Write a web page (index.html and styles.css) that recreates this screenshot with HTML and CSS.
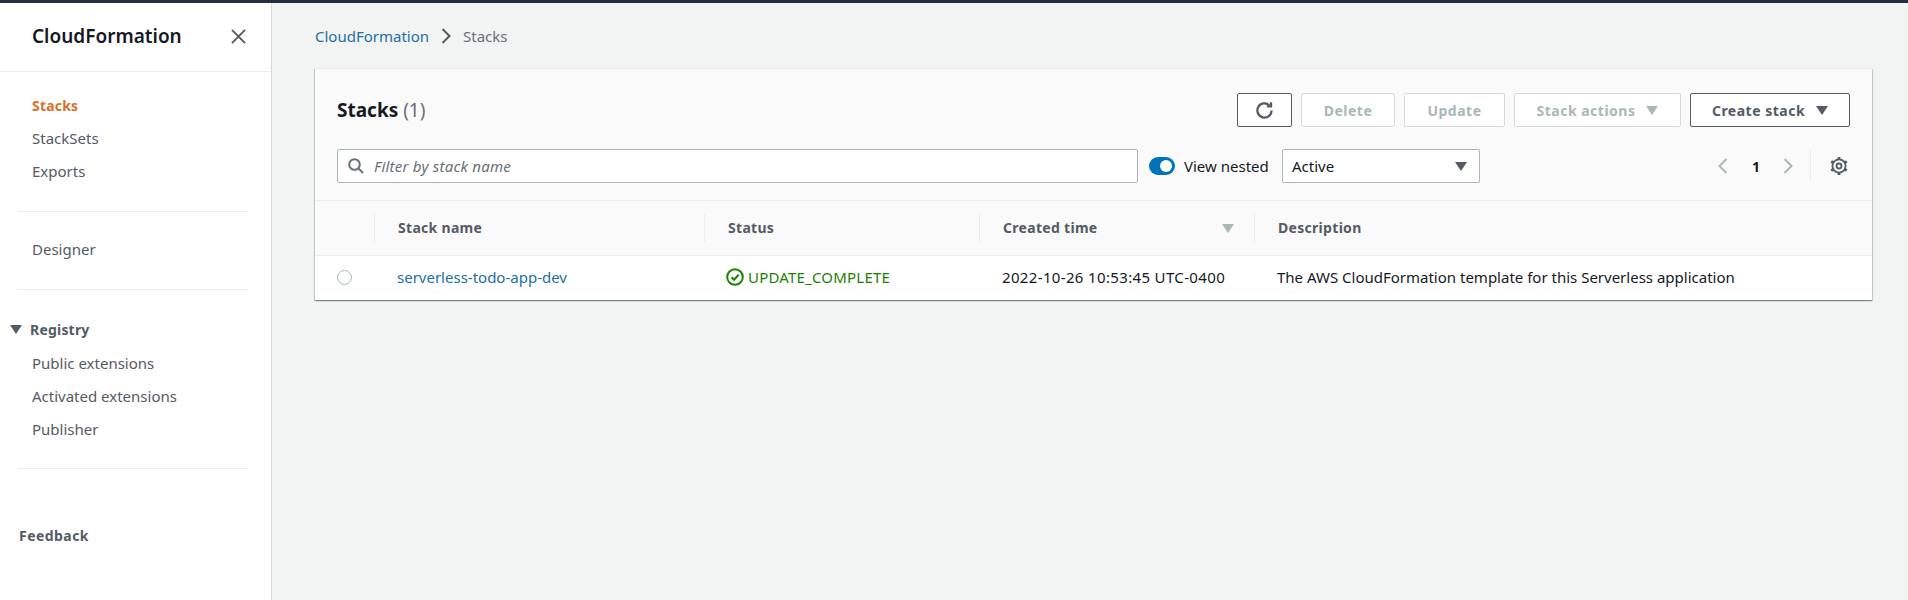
FILE: index.html
```html
<!DOCTYPE html>
<html lang="en">
<head>
<meta charset="utf-8">
<title>CloudFormation Stacks</title>
<link rel="stylesheet" href="styles.css">
</head>
<body>
<div class="app">
  <nav class="side">
    <div class="side-head">
      <span class="side-title">CloudFormation</span>
      <svg class="close" viewBox="0 0 16 16"><path d="M1 1l14 14M15 1L1 15"/></svg>
    </div>
    <div class="side-sec first">
      <a class="nav active">Stacks</a>
      <a class="nav">StackSets</a>
      <a class="nav">Exports</a>
    </div>
    <div class="rule"></div>
    <div class="side-sec">
      <a class="nav">Designer</a>
    </div>
    <div class="rule"></div>
    <div class="side-sec reg">
      <div class="reg-head"><span class="tri side-tri"></span><span>Registry</span></div>
      <a class="nav">Public extensions</a>
      <a class="nav">Activated extensions</a>
      <a class="nav">Publisher</a>
    </div>
    <div class="rule"></div>
    <div class="feedback">Feedback</div>
  </nav>
  <main class="main">
    <div class="crumbs">
      <a class="link">CloudFormation</a>
      <svg class="crumb-sep" viewBox="0 0 10 16"><path d="M1.500 1L8.500 8l-7 7"/></svg>
      <span class="crumb-cur">Stacks</span>
    </div>
    <section class="card">
      <div class="card-head">
        <div class="row-one">
          <h1 class="heading">Stacks <span class="count">(1)</span></h1>
          <div class="actions">
            <button class="btn icon-btn"><svg class="refresh" viewBox="0 0 16 16"><path d="M14 8a6 6 0 1 1-1.900-4.400"/><path d="M13.500 1v3.500H10"/></svg></button>
            <button class="btn off b-delete">Delete</button>
            <button class="btn off b-update">Update</button>
            <button class="btn off b-stack">Stack actions<span class="tri tri-off"></span></button>
            <button class="btn b-create">Create stack<span class="tri"></span></button>
          </div>
        </div>
        <div class="row-two">
          <div class="search">
            <svg class="mag" viewBox="0 0 16 16"><circle cx="6.500" cy="6.500" r="5.300"/><path d="M10.500 10.500L15 15"/></svg>
            <span class="placeholder">Filter by stack name</span>
          </div>
          <div class="toggle"><span class="knob"></span></div>
          <span class="toggle-label">View nested</span>
          <div class="select"><span>Active</span><span class="tri"></span></div>
          <div class="pager">
            <svg class="chev" viewBox="0 0 10 16"><path d="M8.500 1L1.500 8l7 7"/></svg>
            <span class="page">1</span>
            <svg class="chev" viewBox="0 0 10 16"><path d="M1.500 1L8.500 8l-7 7"/></svg>
          </div>
          <div class="gear-wrap">
            <svg class="gear" viewBox="0 0 18 18"><circle cx="9" cy="9" r="2.500"/><circle cx="9" cy="9" r="6.600"/><path class="teeth" d="M9 0v2.600M9 15.400V18M1.200 4.500l2.300 1.300M14.500 12.200l2.300 1.300M1.200 13.500l2.300-1.300M14.500 5.800l2.300-1.300"/></svg>
          </div>
        </div>
      </div>
      <div class="grid thead">
        <div class="th"></div>
        <div class="th sep">Stack name</div>
        <div class="th sep">Status</div>
        <div class="th sep created">Created time<span class="tri tri-off"></span></div>
        <div class="th sep">Description</div>
      </div>
      <div class="grid tbody">
        <div class="td radio-cell"><span class="radio"></span></div>
        <div class="td"><a class="link">serverless-todo-app-dev</a></div>
        <div class="td status">
          <svg class="ok" viewBox="0 0 18 18"><circle cx="9" cy="9" r="7.800"/><path d="M5.500 9.200l2.500 2.500 4.700-5"/></svg>
          <span class="status-text">UPDATE_COMPLETE</span>
        </div>
        <div class="td date">2022-10-26 10:53:45 UTC-0400</div>
        <div class="td">The AWS CloudFormation template for this Serverless application</div>
      </div>
    </section>
  </main>
</div>
</body>
</html>
```
FILE: styles.css
```css
* { box-sizing: border-box; }
html, body { margin: 0; height: 100%; }
body {
  font-family: "Noto Sans", "Open Sans", sans-serif;
  font-size: 15px;
  color: #16191f;
  background: #f2f3f3;
  overflow: hidden;
}
.app {
  display: flex;
  height: 600px;
  border-top: 3px solid #232f3e;
}
.side {
  width: 272px;
  flex: none;
  background: #fff;
  border-right: 1px solid #d5dbdb;
}
.side-head {
  height: 69px;
  border-bottom: 1px solid #eaeded;
  display: flex;
  align-items: center;
  justify-content: space-between;
  padding: 0 25px 2px 32px;
}
.side-title { font-size: 19px; font-weight: 600; line-height: 24px; }
.close { width: 15px; height: 15px; fill: none; stroke: #545b64; stroke-width: 2; }
.side-sec { display: flex; flex-direction: column; padding: 0 0 0 32px; }
.side-sec.first { padding-top: 18px; }
.side-sec.reg { padding-left: 10px; }
.nav {
  display: block;
  height: 33px;
  line-height: 31px;
  color: #545b64;
}
.reg .nav { padding-left: 22px; line-height: 33px; }
.active { color: #d9702c; font-weight: 700; font-size: 14px; letter-spacing: .2px; }
.rule { height: 1px; margin: 22px 23px 22px 18px; background: #eaeded; }
.reg-head {
  display: flex;
  align-items: center;
  height: 35px;
  color: #545b64;
  font-size: 14px;
  font-weight: 700;
  letter-spacing: .2px;
  gap: 8px;
}
.tri {
  display: inline-block;
  width: 0;
  height: 0;
  border-left: 6px solid transparent;
  border-right: 6px solid transparent;
  border-top: 9px solid #545b64;
}
.tri-off { border-top-color: #aab7b8; }
.feedback {
  margin: 57px 0 0 19px;
  font-size: 14px;
  font-weight: 700;
  letter-spacing: .45px;
  color: #545b64;
  line-height: 20px;
}
.main { flex: 1; padding: 0 36px 0 43px; }
.crumbs {
  height: 65px;
  display: flex;
  align-items: center;
  gap: 12px;
}
.link { color: #1d6fa5; }
.crumb-sep { width: 10px; height: 16px; fill: none; stroke: #545b64; stroke-width: 2; }
.crumb-cur { color: #687078; }
.card {
  background: #fff;
  box-shadow: 0 1px 1px 0 rgba(0,28,36,.3), 1px 1px 1px 0 rgba(0,28,36,.15), -1px 1px 1px 0 rgba(0,28,36,.15);
}
.card-head {
  background: #fafafa;
  height: 133px;
  padding: 24px 22px 0;
  border-bottom: 1px solid #eaeded;
  border-top: 1px solid #eaeded;
}
.row-one { display: flex; align-items: center; justify-content: space-between; height: 34px; }
.heading { margin: 0; font-size: 19px; line-height: 24px; font-weight: 700; color: #16191f; }
.count { font-weight: 400; color: #687078; }
.actions { display: flex; gap: 9px; }
.btn {
  height: 34px;
  border: 1px solid #545b64;
  border-radius: 2px;
  background: #fff;
  color: #545b64;
  font: 700 14px "Noto Sans", sans-serif;
  letter-spacing: .5px;
  display: flex;
  align-items: center;
  justify-content: center;
  padding: 0;
  gap: 11px;
}
.off { border-color: #d5dbdb; color: #aab7b8; background: #fff; }
.icon-btn { width: 55px; }
.b-delete { width: 94px; }
.b-update { width: 101px; }
.b-stack { width: 167px; }
.b-create { width: 160px; }
.refresh { width: 19px; height: 19px; fill: none; stroke: #545b64; stroke-width: 1.900; }
.row-two { display: flex; align-items: center; margin-top: 22px; height: 34px; }
.search {
  width: 801px;
  height: 34px;
  background: #fff;
  border: 1px solid #aab7b8;
  border-radius: 2px;
  display: flex;
  align-items: center;
  padding-left: 10px;
  gap: 10px;
}
.mag { width: 16px; height: 16px; fill: none; stroke: #687078; stroke-width: 2; }
.placeholder { font-style: italic; color: #687078; letter-spacing: .23px; }
.toggle {
  width: 26px;
  height: 18px;
  border-radius: 9px;
  background: #0073bb;
  margin-left: 11px;
  padding: 3px 3px 3px 11px;
}
.knob { display: block; width: 12px; height: 12px; border-radius: 50%; background: #fff; }
.toggle-label { margin-left: 9px; color: #16191f; width: 98px; white-space: nowrap; }
.select {
  width: 198px;
  height: 34px;
  background: #fff;
  border: 1px solid #aab7b8;
  border-radius: 2px;
  display: flex;
  align-items: center;
  justify-content: space-between;
  padding: 0 12px 0 9px;
}
.pager {
  margin-left: auto;
  display: flex;
  align-items: center;
  gap: 24px;
  padding-right: 17px;
}
.chev { width: 10px; height: 16px; fill: none; stroke: #aab7b8; stroke-width: 2; }
.page { font-weight: 700; font-size: 14px; width: 7px; text-align: center; }
.gear-wrap {
  height: 32px;
  border-left: 1px solid #eaeded;
  padding-left: 19px;
  padding-right: 2px;
  display: flex;
  align-items: center;
}
.gear { width: 18px; height: 18px; fill: none; stroke: #545b64; stroke-width: 1.800; }
.teeth { stroke-width: 2.800; }
.grid { display: grid; grid-template-columns: 59px 330px 275px 275px 1fr; }
.thead { height: 55px; background: #fafafa; border-bottom: 1px solid #eaeded; align-items: center; }
.th { height: 28px; line-height: 28px; padding-left: 23px; font-size: 14px; letter-spacing: .3px; font-weight: 700; color: #545b64; white-space: nowrap; }
.sep { border-left: 1px solid #eaeded; }
.created { display: flex; align-items: center; justify-content: space-between; padding-right: 20px; }
.tbody { height: 44px; padding-bottom: 2px; align-items: center; background: #fff; }
.td { padding-left: 23px; white-space: nowrap; }
.date { letter-spacing: .35px; }
.radio-cell { display: flex; padding-left: 22px; }
.radio { width: 15px; height: 15px; border: 1px solid #aab7b8; border-radius: 50%; background: #fff; }
.status { display: flex; align-items: center; gap: 4px; color: #1d8102; padding-left: 22px; }
.status-text { letter-spacing: .2px; }
.ok { width: 18px; height: 18px; fill: none; stroke: #1d8102; stroke-width: 2; }
```
